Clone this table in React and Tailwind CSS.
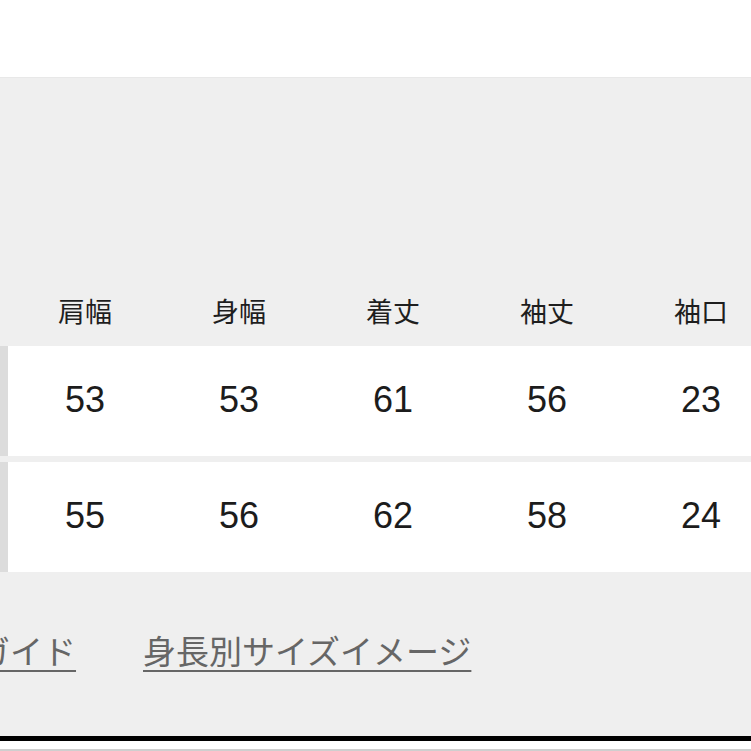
const columns = ['肩幅', '身幅', '着丈', '袖丈', '袖口'];

const rows = [
  ['53', '53', '61', '56', '23'],
  ['55', '56', '62', '58', '24'],
];

function App() {
  return (
    <div className="w-[751px] h-[751px] overflow-hidden bg-white" style={{ fontFamily: '"Noto Sans CJK JP", "Noto Sans", sans-serif' }}>
      <div className="h-[77px] bg-white"></div>

      <div className="bg-[#efefef] border-t border-[#e8e8e8] h-[659px] overflow-hidden">
        <div className="pt-[210px] pl-[8px]">
          <div className="grid grid-cols-[repeat(5,154px)] h-[58px] items-center">
            {columns.map((label) => (
              <div key={label} className="text-center text-[27px] leading-none text-[#1e1e1e] pb-[14px]">
                {label}
              </div>
            ))}
          </div>
        </div>

        <div className="flex flex-col gap-[6px]">
          {rows.map((row, i) => (
            <div key={i} className="flex h-[110px]">
              <div className="w-[8px] shrink-0 bg-[#dcdcdc]"></div>
              <div className="grid grid-cols-[repeat(5,154px)] items-center bg-white flex-1">
                {row.map((value, j) => (
                  <div key={j} className="text-center text-[36px] text-[#1c1c1c] pb-[2px]" style={{ fontFamily: '"Liberation Sans", Arial, sans-serif' }}>
                    {value}
                  </div>
                ))}
              </div>
            </div>
          ))}
        </div>

        <div className="flex items-center gap-[67px] mt-[58px] -ml-[121px] whitespace-nowrap">
          <a className="text-[33px] leading-[40px] text-[#666666] underline decoration-2 underline-offset-[6px]">サイズガイド</a>
          <a className="text-[33px] leading-[40px] text-[#666666] underline decoration-2 underline-offset-[6px]">身長別サイズイメージ</a>
        </div>
      </div>

      <div className="h-[5px] bg-black"></div>
      <div className="h-[8px] bg-white"></div>
      <div className="h-[2px] bg-[#cfcfcf]"></div>
    </div>
  );
}

export default App;
